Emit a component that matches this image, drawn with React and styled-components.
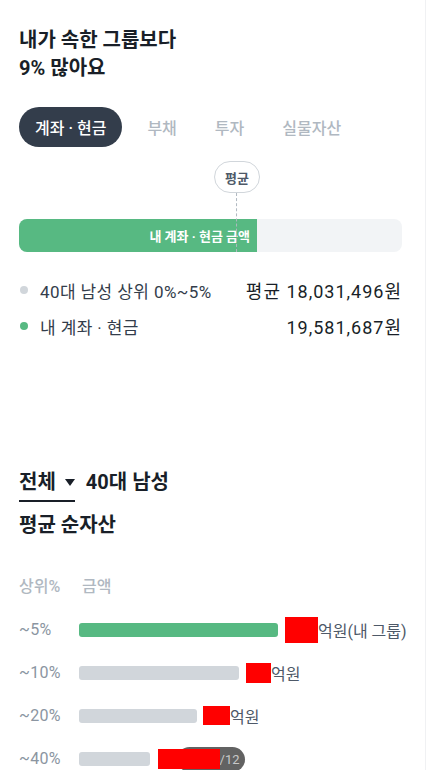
import React from 'react';
import styled, { createGlobalStyle } from 'styled-components';

const GlobalStyle = createGlobalStyle`
    body {
        margin: 0;
        background: #fff;
        font-family: Roboto, 'Noto Sans CJK KR', sans-serif;
        color: #191f28;
    }
`;

const Page = styled.div`
    box-sizing: border-box;
    width: 426px;
    min-height: 770px;
    padding: 26px 23px 0 19px;
    border-right: 1px solid #f0f1f3;
    position: relative;
    overflow: hidden;
`;

const Title = styled.h1`
    margin: 0;
    font-size: 20px;
    font-weight: 700;
    line-height: 28px;
    color: #191f28;
`;

const Tabs = styled.div`
    display: flex;
    gap: 12px;
    margin-top: 25px;
`;

const Tab = styled.div`
    height: 40px;
    display: flex;
    align-items: center;
    padding: 0 ${p => (p.$active ? '16px' : '13px')};
    border-radius: 20px;
    font-size: 16px;
    font-weight: 500;
    background: ${p => (p.$active ? '#333d4b' : 'transparent')};
    color: ${p => (p.$active ? '#fff' : '#b0b8c1')};
`;

const Chart = styled.div`
    position: relative;
    margin-top: 14px;
    padding-top: 58px;
`;

const Marker = styled.div`
    position: absolute;
    top: 0;
    transform: translateX(-50%);
    display: flex;
    flex-direction: column;
    align-items: center;
    z-index: 2;
`;

const Bubble = styled.div`
    box-sizing: border-box;
    height: 32px;
    padding: 0 10px;
    display: flex;
    align-items: center;
    border: 1px solid #d1d6db;
    border-radius: 16px;
    background: #fff;
    font-size: 13px;
    font-weight: 700;
    color: #4e5968;
`;

const Stem = styled.div`
    width: 0;
    height: 59px;
    border-left: 1px dashed #b0b8c1;
`;

const Track = styled.div`
    height: 33px;
    border-radius: 8px;
    background: #f2f4f6;
    overflow: hidden;
    display: flex;
`;

const Fill = styled.div`
    height: 100%;
    background: #57b982;
    display: flex;
    align-items: center;
    justify-content: flex-end;
    padding-right: 7px;
    box-sizing: border-box;
    font-size: 13px;
    font-weight: 700;
    color: #fff;
    white-space: nowrap;
`;

const Legend = styled.div`
    margin-top: 20px;
`;

const LegendRow = styled.div`
    height: 36px;
    display: flex;
    align-items: center;
    white-space: nowrap;
`;

const Dot = styled.span`
    width: 8px;
    height: 8px;
    border-radius: 50%;
    margin: 0 12px 0 1px;
    background: ${p => p.$color};
`;

const LegendLabel = styled.span`
    flex: 1;
    font-size: 17px;
    letter-spacing: 0.4px;
    color: #333d4b;
`;

const LegendValue = styled.span`
    font-size: 18px;
    font-weight: 400;
    letter-spacing: 1px;
    color: #191f28;
`;

const Filter = styled.div`
    margin-top: 124px;
    display: flex;
    align-items: flex-start;
    gap: 11px;
    font-size: 20px;
    font-weight: 700;
    line-height: 28px;
`;

const Dropdown = styled.div`
    display: flex;
    align-items: center;
    gap: 9px;
    padding-bottom: 4px;
    border-bottom: 2px solid #191f28;
`;

const Caret = styled.span`
    width: 0;
    height: 0;
    border-left: 5px solid transparent;
    border-right: 5px solid transparent;
    border-top: 7px solid #191f28;
`;

const SubTitle = styled.h2`
    margin: 9px 0 0 0;
    font-size: 20px;
    font-weight: 700;
    line-height: 28px;
`;

const TableHead = styled.div`
    margin-top: 38px;
    display: flex;
    line-height: 20px;
    font-size: 16px;
    font-weight: 500;
    color: #b0b8c1;
`;

const HeadCell = styled.span`
    width: ${p => p.$width || 'auto'};
`;

const RankRow = styled.div`
    height: 43px;
    display: flex;
    align-items: center;
    white-space: nowrap;
`;

const RankFirst = styled(RankRow)`
    margin-top: 11px;
`;

const RankLabel = styled.span`
    flex: 0 0 60px;
    font-size: 16px;
    letter-spacing: 0.3px;
    color: #8b95a1;
`;

const RankBar = styled.div`
    flex-shrink: 0;
    height: 14px;
    border-radius: 3px;
    background: ${p => (p.$mine ? '#57b982' : '#d1d6db')};
`;

const Redacted = styled.span`
    flex-shrink: 0;
    position: relative;
    z-index: 3;
    margin-left: ${p => p.$gap}px;
    width: ${p => p.$w}px;
    height: ${p => p.$h}px;
    background: #ff0000;
`;

const Amount = styled.span`
    font-size: 16px;
    color: #4e5968;
`;

const Pager = styled.div`
    position: absolute;
    left: 177px;
    bottom: 8px;
    width: 68px;
    height: 25px;
    border-radius: 13px;
    background: rgba(70, 70, 70, 0.85);
    display: flex;
    align-items: center;
    gap: 6px;
    padding-left: 11px;
    box-sizing: border-box;
    font-size: 13px;
    color: #c8c8c8;
    z-index: 1;
`;

const PagerIcon = styled.span`
    width: 9px;
    height: 8px;
    border: 1px solid #c8c8c8;
    border-radius: 1px;
`;

const ranks = [
    { label: '~5%', width: 199, mine: true, red: [7, 33, 26], text: '억원(내 그룹)' },
    { label: '~10%', width: 160, red: [7, 25, 20], text: '억원' },
    { label: '~20%', width: 118, red: [6, 27, 19], text: '억원' },
    { label: '~40%', width: 71, red: [8, 62, 20], text: '' },
];

const App = () => (
    <>
        <GlobalStyle />
        <Page>
            <Title>
                내가 속한 그룹보다
                <br />
                9% 많아요
            </Title>

            <Tabs>
                <Tab $active>계좌 · 현금</Tab>
                <Tab>부채</Tab>
                <Tab>투자</Tab>
                <Tab>실물자산</Tab>
            </Tabs>

            <Chart>
                <Marker style={{ left: `${(218 / 383) * 100}%` }}>
                    <Bubble>평균</Bubble>
                    <Stem />
                </Marker>
                <Track>
                    <Fill style={{ width: `${(238 / 383) * 100}%` }}>내 계좌 · 현금 금액</Fill>
                </Track>
            </Chart>

            <Legend>
                <LegendRow>
                    <Dot $color="#d1d6db" />
                    <LegendLabel>40대 남성 상위 0%~5%</LegendLabel>
                    <LegendValue>평균 18,031,496원</LegendValue>
                </LegendRow>
                <LegendRow>
                    <Dot $color="#57b982" />
                    <LegendLabel>내 계좌 · 현금</LegendLabel>
                    <LegendValue>19,581,687원</LegendValue>
                </LegendRow>
            </Legend>

            <Filter>
                <Dropdown>
                    전체 <Caret />
                </Dropdown>
                <span>40대 남성</span>
            </Filter>
            <SubTitle>평균 순자산</SubTitle>

            <TableHead>
                <HeadCell $width="63px">상위%</HeadCell>
                <HeadCell>금액</HeadCell>
            </TableHead>

            {ranks.map((r, i) => {
                const Row = i === 0 ? RankFirst : RankRow;
                return (
                    <Row key={r.label}>
                        <RankLabel>{r.label}</RankLabel>
                        <RankBar $mine={r.mine} style={{ width: r.width }} />
                        <Redacted $gap={r.red[0]} $w={r.red[1]} $h={r.red[2]} />
                        {r.text && <Amount>{r.text}</Amount>}
                    </Row>
                );
            })}

            <Pager>
                <PagerIcon />
                10/12
            </Pager>
        </Page>
    </>
);

export default App;
